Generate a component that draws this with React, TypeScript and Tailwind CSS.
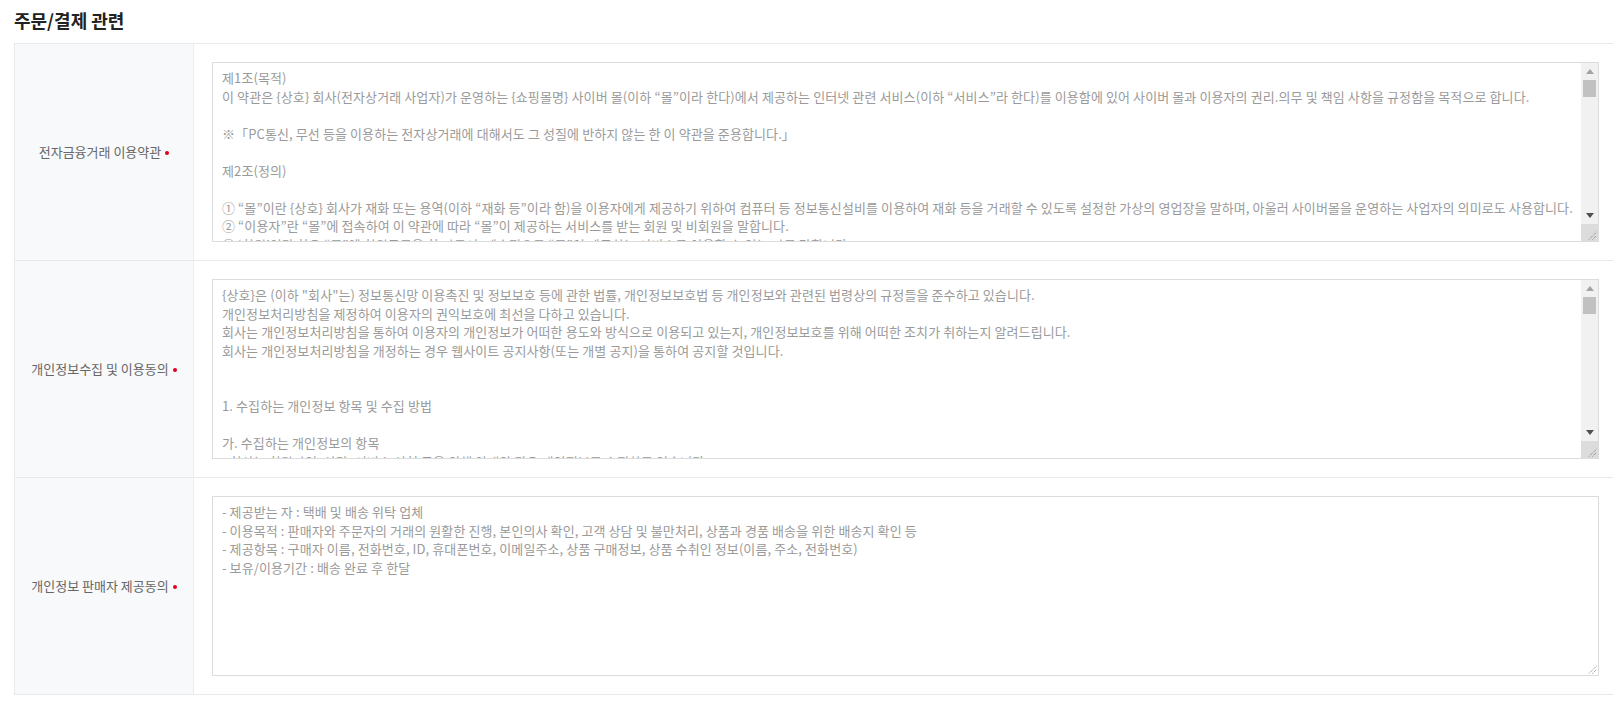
import React from "react";

const FONT = { fontFamily: '"Noto Sans CJK KR", "Noto Sans", sans-serif' };

const text1 = `제1조(목적)
이 약관은 {상호} 회사(전자상거래 사업자)가 운영하는 {쇼핑몰명} 사이버 몰(이하 “몰”이라 한다)에서 제공하는 인터넷 관련 서비스(이하 “서비스”라 한다)를 이용함에 있어 사이버 몰과 이용자의 권리.의무 및 책임 사항을 규정함을 목적으로 합니다.

※「PC통신, 무선 등을 이용하는 전자상거래에 대해서도 그 성질에 반하지 않는 한 이 약관을 준용합니다.」

제2조(정의)

① “몰”이란 {상호} 회사가 재화 또는 용역(이하 “재화 등”이라 함)을 이용자에게 제공하기 위하여 컴퓨터 등 정보통신설비를 이용하여 재화 등을 거래할 수 있도록 설정한 가상의 영업장을 말하며, 아울러 사이버몰을 운영하는 사업자의 의미로도 사용합니다.
② “이용자”란 “몰”에 접속하여 이 약관에 따라 “몰”이 제공하는 서비스를 받는 회원 및 비회원을 말합니다.
③ ‘회원’이라 함은 “몰”에 회원등록을 한 자로서, 계속적으로 “몰”이 제공하는 서비스를 이용할 수 있는 자를 말합니다.
④ ‘비회원’이라 함은 회원에 가입하지 않고 “몰”이 제공하는 서비스를 이용하는 자를 말합니다.`;

const text2 = `{상호}은 (이하 "회사"는) 정보통신망 이용촉진 및 정보보호 등에 관한 법률, 개인정보보호법 등 개인정보와 관련된 법령상의 규정들을 준수하고 있습니다.
개인정보처리방침을 제정하여 이용자의 권익보호에 최선을 다하고 있습니다.
회사는 개인정보처리방침을 통하여 이용자의 개인정보가 어떠한 용도와 방식으로 이용되고 있는지, 개인정보보호를 위해 어떠한 조치가 취하는지 알려드립니다.
회사는 개인정보처리방침을 개정하는 경우 웹사이트 공지사항(또는 개별 공지)을 통하여 공지할 것입니다.


1. 수집하는 개인정보 항목 및 수집 방법

가. 수집하는 개인정보의 항목
- 회사는 회원가입, 상담, 서비스 신청 등을 위해 아래와 같은 개인정보를 수집하고 있습니다.
- 수집항목 : 이름, 생년월일, 성별, 로그인ID, 비밀번호`;

const text3 = `- 제공받는 자 : 택배 및 배송 위탁 업체
- 이용목적 : 판매자와 주문자의 거래의 원활한 진행, 본인의사 확인, 고객 상담 및 불만처리, 상품과 경품 배송을 위한 배송지 확인 등
- 제공항목 : 구매자 이름, 전화번호, ID, 휴대폰번호, 이메일주소, 상품 구매정보, 상품 수취인 정보(이름, 주소, 전화번호)
- 보유/이용기간 : 배송 완료 후 한달`;

function Grip() {
  return (
    <svg width="9" height="9" viewBox="0 0 9 9">
      <line x1="1" y1="8.5" x2="8.5" y2="1" stroke="#777" strokeWidth="1" strokeDasharray="1 1" />
      <line x1="4.5" y1="8.5" x2="8.5" y2="4.5" stroke="#777" strokeWidth="1" strokeDasharray="1 1" />
    </svg>
  );
}

function Scrollbar() {
  return (
    <div className="w-[17px] shrink-0 flex flex-col bg-[#f1f1f1]">
      <div className="h-[17px] flex items-center justify-center">
        <svg width="8" height="5" viewBox="0 0 8 5">
          <polygon points="4,0 8,5 0,5" fill="#a3a3a3" />
        </svg>
      </div>
      <div className="px-[2px]">
        <div className="h-[17px] bg-[#c1c1c1]" />
      </div>
      <div className="flex-1" />
      <div className="h-[17px] flex items-center justify-center">
        <svg width="8" height="5" viewBox="0 0 8 5">
          <polygon points="0,0 8,0 4,5" fill="#505050" />
        </svg>
      </div>
      <div className="h-[17px] bg-[#dcdcdc] flex items-end justify-end pr-[1px] pb-[1px]">
        <Grip />
      </div>
    </div>
  );
}

function Box({ text, scroll }: { text: string; scroll: boolean }) {
  return (
    <div className="relative h-[180px] border border-[#dcdcdc] bg-white flex">
      <div className="flex-1 overflow-hidden pl-[9px] pr-[6px] pt-[6px] text-[13px] leading-[18.5px] tracking-[0.1px] text-[#9a9a9a] whitespace-pre-wrap">
        {text}
      </div>
      {scroll ? (
        <Scrollbar />
      ) : (
        <div className="absolute right-[1px] bottom-[1px]">
          <Grip />
        </div>
      )}
    </div>
  );
}

function Row({ label, text, scroll }: { label: string; text: string; scroll: boolean }) {
  return (
    <div className="flex border-b border-[#e9e9e9]">
      <div className="w-[179px] shrink-0 bg-[#f8f9fb] border-r border-[#ececec] flex items-center justify-center text-[13px] text-[#666]">
        <span>{label}</span>
        <span className="ml-[4px] mt-[1px] w-[4px] h-[4px] rounded-full bg-[#e0001b]" />
      </div>
      <div className="flex-1 pl-[18px] pr-[14px] py-[18px]">
        <Box text={text} scroll={scroll} />
      </div>
    </div>
  );
}

export default function App() {
  return (
    <div className="w-[1613px] h-[701px] bg-white overflow-hidden" style={FONT}>
      <h2 className="h-[43px] flex items-center pl-[14px] pb-[2px] text-[18px] font-bold text-[#222]">
        주문/결제 관련
      </h2>
      <div className="ml-[14px] border-t border-l border-[#e9e9e9]">
        <Row label="전자금융거래 이용약관" text={text1} scroll={true} />
        <Row label="개인정보수집 및 이용동의" text={text2} scroll={true} />
        <Row label="개인정보 판매자 제공동의" text={text3} scroll={false} />
      </div>
    </div>
  );
}
